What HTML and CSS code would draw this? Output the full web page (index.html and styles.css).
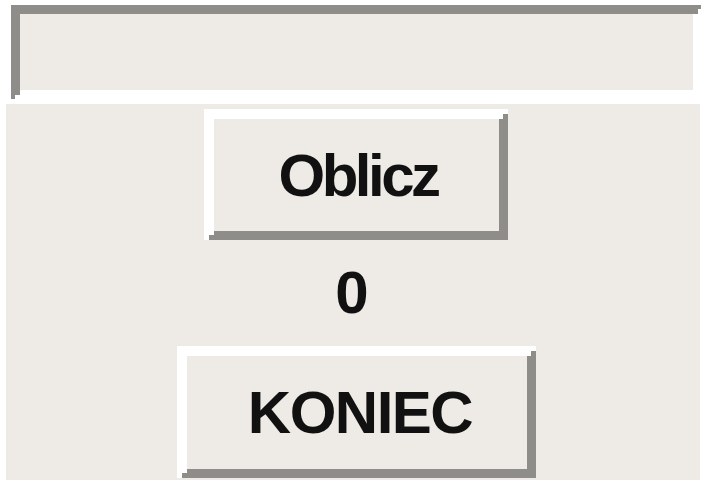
FILE: index.html
```html
<!DOCTYPE html>
<html lang="pl">
<head>
<meta charset="utf-8">
<title>Oblicz</title>
<link rel="stylesheet" href="styles.css">
</head>
<body>
  <div class="field">
    <div class="field-inner"></div>
  </div>
  <div class="panel">
    <div class="btn btn-calc">
      <div class="btn-face"><span class="btn-text calc-text">Oblicz</span></div>
    </div>
    <div class="result">0</div>
    <div class="btn btn-end">
      <div class="btn-face"><span class="btn-text end-text">KONIEC</span></div>
    </div>
  </div>
</body>
</html>
```
FILE: styles.css
```css
html, body {
  margin: 0;
  padding: 0;
  background: #ffffff;
  overflow: hidden;
  width: 701px;
  height: 480px;
}

body {
  font-family: "Liberation Sans", Arial, sans-serif;
  color: #111111;
}

/* sunken text field */
.field {
  box-sizing: border-box;
  margin: 5px 0 0 11px;
  width: 690px;
  height: 94px;
  padding: 4px 3px 4px 4px;
  background: #ffffff;
  box-shadow: inset 4px 4px 0 #8e8d8a, inset -3px -4px 0 #ffffff;
}

.field-inner {
  box-sizing: border-box;
  width: 100%;
  height: 100%;
  background: #eeebe6;
  box-shadow: inset 5px 5px 0 #8e8d8a, inset -5px -5px 0 #ffffff;
}

/* panel under the field */
.panel {
  margin: 5px 0 0 6px;
  width: 694px;
  height: 376px;
  background: #eeebe6;
  display: flex;
  flex-direction: column;
  align-items: center;
}

/* raised buttons */
.btn {
  box-sizing: border-box;
  padding: 5px 5px 5px 5px;
  background: #eeebe6;
  box-shadow: inset 5px 5px 0 #ffffff, inset -5px -5px 0 #8e8d8a;
}

.btn-face {
  box-sizing: border-box;
  width: 100%;
  height: 100%;
  padding: 5px 4px 4px 5px;
  box-shadow: inset 5px 5px 0 #ffffff, inset -4px -4px 0 #8e8d8a;
  display: flex;
  align-items: center;
  justify-content: center;
}

.btn-calc {
  margin: 5px 0 0 6px;
  width: 304px;
  height: 131px;
}

.btn-end {
  margin: 0 0 0 7px;
  width: 359px;
  height: 132px;
}

.btn-text {
  font-weight: bold;
  font-size: 60px;
  line-height: normal;
}

.calc-text {
  letter-spacing: -3.5px;
  margin-left: 3px;
}

.end-text {
  letter-spacing: -1.5px;
  margin-left: 6px;
}

.result {
  height: 106px;
  line-height: 106px;
  font-size: 60px;
  font-weight: bold;
  margin-right: 2px;
}
```
